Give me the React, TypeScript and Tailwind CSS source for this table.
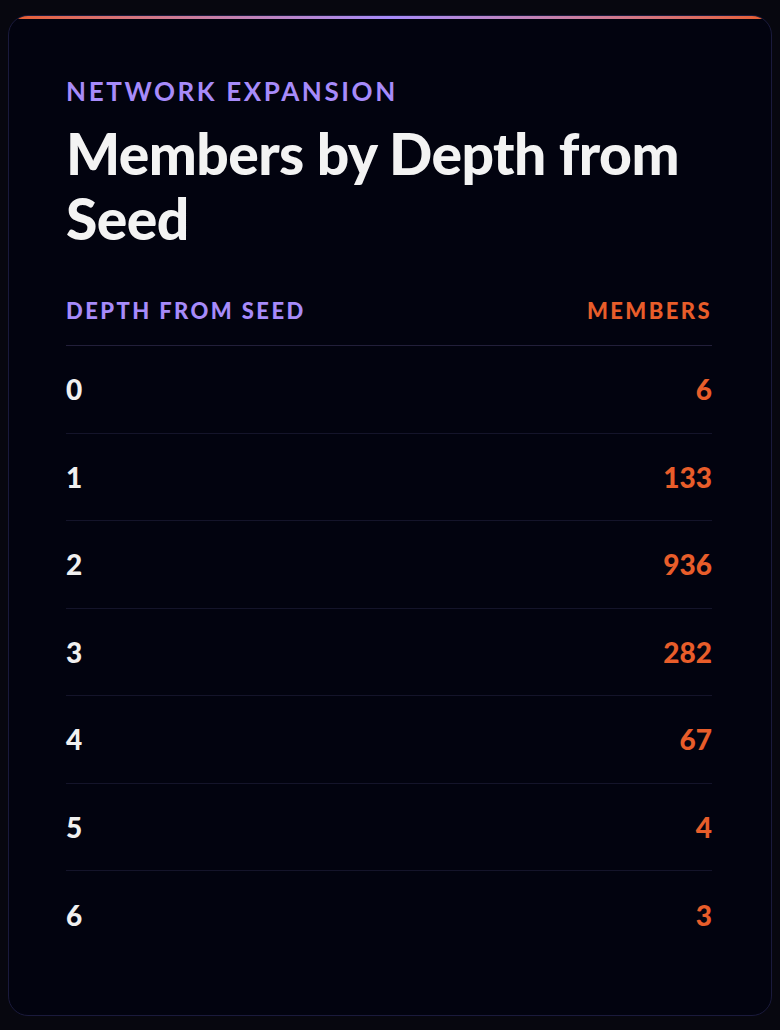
import React from "react";

const rows = [
  { d: "0", m: "6" },
  { d: "1", m: "133" },
  { d: "2", m: "936" },
  { d: "3", m: "282" },
  { d: "4", m: "67" },
  { d: "5", m: "4" },
  { d: "6", m: "3" },
];

export default function App() {
  return (
    <div
      className="min-h-[1030px] bg-[#07070f] px-2 pt-[15px] pb-[15px]"
      style={{ fontFamily: "Lato, 'Open Sans', sans-serif" }}
    >
      <div className="relative overflow-hidden rounded-[20px] border border-[#1a1a3c] bg-[#02030f] pl-[57px] pr-[59px] pt-[59px] pb-[56px]">
        <div className="absolute left-0 right-0 top-0 h-[3px] bg-gradient-to-r from-[#e85d2a] via-[#a78bfa] to-[#e85d2a]" />
        <div className="text-[26px] font-bold leading-[32px] tracking-[0.1em] text-[#a78bfa]">
          NETWORK EXPANSION
        </div>
        <h1 className="mt-[14px] text-[57px] font-black leading-[65px] tracking-[-0.01em] text-[#f3f3f3]">
          Members by Depth from Seed
        </h1>
        <div className="mt-[46px] flex items-center justify-between border-b border-[#221f3a] pb-[20px] text-[22px] font-black leading-[28px] tracking-[0.11em]">
          <span className="text-[#a78bfa]">DEPTH FROM SEED</span>
          <span className="text-[#e85d2a]">MEMBERS</span>
        </div>
        <div>
          {rows.map((r, i) => (
            <div
              key={r.d}
              className={`flex h-[87.5px] items-center justify-between text-[28px] font-black ${
                i < rows.length - 1 ? "border-b border-[#14142a]" : ""
              }`}
            >
              <span className="text-[#f0f0f0]">{r.d}</span>
              <span className="text-[#e85d2a]">{r.m}</span>
            </div>
          ))}
        </div>
      </div>
    </div>
  );
}
